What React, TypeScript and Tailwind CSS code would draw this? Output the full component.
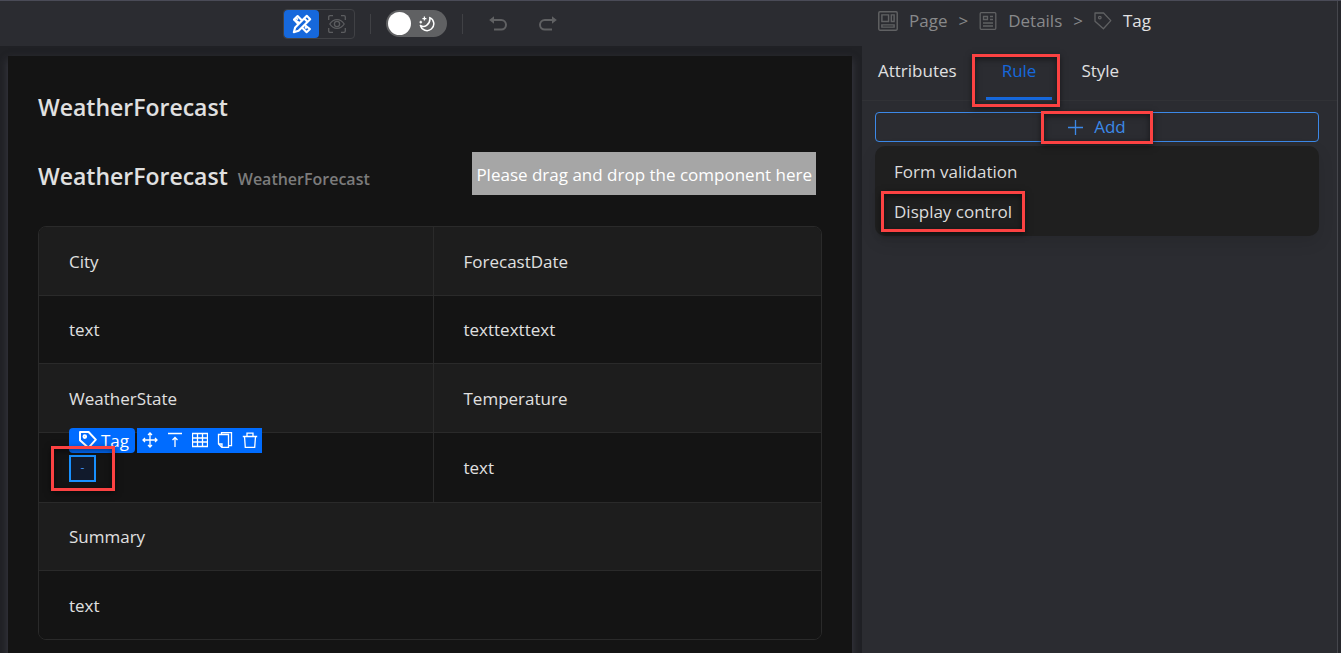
import { useState } from 'react';
import type { ReactNode } from 'react';
import clsx from 'clsx';

interface IconProps {
  className?: string;
}

function DesignIcon({ className }: IconProps) {
  return (
    <svg viewBox="0 0 20 20" fill="none" stroke="currentColor" strokeWidth="2.1" strokeLinejoin="round" className={className}>
      <path d="M7.2 8.8 2 5.6 5.6 2 8.8 5.2 9.9 6.3M12.8 11.2 18 15l-3.4 3.2-4.4-4.4" />
      <path d="M2 5.4 6.2 10M4.4 5.6l1.4-1.4M13.2 14.4l1.4-1.4" />
      <path d="M14.8 1.8 18.2 5.2 6.6 16.8 1.8 18.2 3.2 13.4Z" />
      <path d="m12.2 4.6 3.2 3.2" />
    </svg>
  );
}

function PreviewIcon({ className }: IconProps) {
  return (
    <svg viewBox="0 0 18 18" fill="none" stroke="currentColor" strokeWidth="1.3" className={className}>
      <path d="M.7 5V2Q.7.7 2 .7H5M13 .7h3Q17.3.7 17.3 2v3M17.3 13v3q0 1.3-1.3 1.3h-3M5 17.3H2Q.7 17.3.7 16v-3" />
      <path d="M1.8 9Q4.6 4.6 9 4.6T16.2 9Q13.4 13.4 9 13.4T1.8 9Z" />
      <circle cx="9" cy="9" r="2.6" />
    </svg>
  );
}

function MoonIcon({ className }: IconProps) {
  return (
    <svg viewBox="0 0 16 16" fill="none" stroke="currentColor" strokeWidth="1.5" className={className}>
      <path d="M10.8 1.6A6.8 6.8 0 1 1 1.4 9.4Q4.5 11.6 7.6 9.3 11.6 6.4 10.8 1.6Z" strokeLinejoin="round" />
      <path d="M5.4.6v4M3.4 2.6h4" strokeWidth="1.3" />
      <path d="M1.8 4.8v2.6M.5 6.1h2.6" strokeWidth="1.2" />
    </svg>
  );
}

function UndoIcon({ className }: IconProps) {
  return (
    <svg viewBox="0 0 18 16" fill="none" stroke="currentColor" strokeWidth="2" className={className}>
      <path d="M4 4h8.2a4.8 4.8 0 0 1 0 9.6H5" />
      <path d="M5 .2v7.6L.2 4Z" fill="currentColor" stroke="none" />
    </svg>
  );
}

function PageIcon({ className }: IconProps) {
  return (
    <svg viewBox="0 0 18 18" fill="none" stroke="currentColor" strokeWidth="1.3" className={className}>
      <rect x=".7" y=".7" width="16.6" height="16.6" rx="1" />
      <path d="M3.5 3.5h6v6h-6ZM12 3.5h2.5v6H12ZM3.5 12.5h11v2h-11Z" />
    </svg>
  );
}

function DetailsIcon({ className }: IconProps) {
  return (
    <svg viewBox="0 0 18 18" fill="none" stroke="currentColor" strokeWidth="1.3" className={className}>
      <rect x="1.2" y=".7" width="15.6" height="16.6" rx="1" />
      <path d="M4.5 4.5h4v3h-4ZM11 4.5h3M11 7.5h3M4 11h10M4 14h10" />
    </svg>
  );
}

function TagIcon({ className, strokeWidth = 1.3 }: IconProps & { strokeWidth?: number }) {
  return (
    <svg viewBox="0 0 18 18" fill="none" stroke="currentColor" strokeWidth={strokeWidth} className={className}>
      <path d="M1 1h8.6l7.2 7.6-7.4 8.2L1 9.2Z" strokeLinejoin="round" />
      <circle cx="5.8" cy="5.6" r="1.3" />
    </svg>
  );
}

// Red frame around a highlighted element
function Callout({ className }: IconProps) {
  return (
    <span
      className={clsx(
        'pointer-events-none absolute z-20 border-3 border-[#fc4242] shadow-[0_2px_6px_rgba(0,0,0,0.5),inset_0_2px_6px_rgba(0,0,0,0.5)]',
        className,
      )}
    />
  );
}

const TAG_ACTIONS = [
  { label: 'Move', path: 'M8 1v14M1 8h14M6 3l2-2 2 2M6 13l2 2 2-2M3 6 1 8l2 2M13 6l2 2-2 2' },
  { label: 'Select parent', path: 'M1 1.5h14M8 15V5.5M5.5 8 8 5.5 10.5 8' },
  { label: 'Grid', path: 'M.5 1.5h15v13H.5ZM.5 6h15M.5 10h15M5.5 1.5v13M10.5 1.5v13' },
  { label: 'Copy', path: 'M4.5 2.5V.6h10v13H12M1.5 2.5H11.5v13H5l-3.5-3.5ZM1.5 12H5v3.5' },
  { label: 'Delete', path: 'M.8 4.5h14.4M5 4.5V1.2h6v3.3M2.5 4.5l.8 10.9h9.4l.8-10.9' },
];

function TagSelection() {
  return (
    <div className="relative flex size-[27px] items-center justify-center border-2 border-[#1890ff] bg-[#111a2c] text-xs text-[#3c89e8]">
      -
      <div className="absolute -top-[29px] -left-0.5 z-10 flex h-[25px] gap-0.5 text-white">
        <div className="flex items-center gap-1 rounded-sm bg-[#006cff] pr-1.5 pl-2.5 text-[17px]">
          <TagIcon className="size-[18px]" strokeWidth={2} />
          <span className="pt-0.5">Tag</span>
        </div>
        <div className="flex bg-[#006cff]">
          {TAG_ACTIONS.map((action) => (
            <button key={action.label} aria-label={action.label} className="flex w-[25px] items-center justify-center">
              <svg viewBox="0 0 16 16" fill="none" stroke="currentColor" strokeWidth="1.3" className="size-4">
                <path d={action.path} />
              </svg>
            </button>
          ))}
        </div>
      </div>
      <Callout className="-top-[11px] -left-5 h-[45px] w-16" />
    </div>
  );
}

function Toolbar() {
  const [dark, setDark] = useState(true);

  return (
    <header className="flex h-[45px] items-center justify-center bg-[#2b2c31]">
      <div className="flex h-[30px] rounded border border-[#404145]">
        <button aria-label="Design" className="flex w-[35px] items-center justify-center rounded bg-[#1668dc] text-white">
          <DesignIcon className="size-5" />
        </button>
        <button aria-label="Preview" className="flex w-[35px] items-center justify-center text-[#5c5d60]">
          <PreviewIcon className="size-[18px]" />
        </button>
      </div>
      <div className="mx-[15px] h-5 w-px bg-[#404145]" />
      <button
        role="switch"
        aria-checked={dark}
        aria-label="Dark mode"
        onClick={() => setDark(!dark)}
        className="flex h-[27px] w-[61px] items-center justify-between rounded-full bg-[#606163] pr-3 pl-0.5"
      >
        <span className="size-[23px] rounded-full bg-white" />
        <MoonIcon className="size-4 text-white" />
      </button>
      <div className="ml-[15px] h-5 w-px bg-[#404145]" />
      <div className="flex pr-1.5 pl-2.5 text-[#606163]">
        <button aria-label="Undo" className="flex w-[50px] justify-center">
          <UndoIcon className="h-4 w-[18px]" />
        </button>
        <button aria-label="Redo" className="flex w-[50px] justify-center">
          <UndoIcon className="h-4 w-[18px] -scale-x-100" />
        </button>
      </div>
    </header>
  );
}

function Cell({ children, header, last, span }: { children: ReactNode; header?: boolean; last?: boolean; span?: number }) {
  const Tag = header ? 'th' : 'td';
  return (
    <Tag
      colSpan={span}
      className={clsx(
        'px-[30px] pt-0.5 text-left font-normal',
        header ? 'bg-[#1d1d1d]' : 'bg-[#141414]',
        last && 'border-l border-[#2a2a2a]',
      )}
    >
      {children}
    </Tag>
  );
}

function Canvas() {
  return (
    <main className="flex flex-1 bg-[#202125] px-2 pt-2.5 pr-2.5">
      <div className="flex-1 bg-[#141414] px-[30px] pt-[35px] pb-3 text-[#e0e0e0] shadow-[0_4px_8px_rgba(80,80,92,0.6)]">
        <h1 className="text-[23px] leading-8 font-semibold">WeatherForecast</h1>
        <div className="mt-[29px] mr-1.5 flex h-[43px] items-center justify-between">
          <div className="flex items-baseline gap-2.5 pt-1">
            <h2 className="text-[23px] leading-8 font-semibold">WeatherForecast</h2>
            <span className="text-base font-semibold text-[#7c7c7c]">WeatherForecast</span>
          </div>
          <div className="flex h-[43px] items-center bg-[#a6a6a6] px-1 pt-0.5 text-white">
            Please drag and drop the component here
          </div>
        </div>
        <div className="mt-[31px] overflow-hidden rounded-lg border border-[#2a2a2a]">
          <table className="w-full table-fixed border-collapse">
            <colgroup>
              <col className="w-[394px]" />
              <col />
            </colgroup>
            <tbody className="divide-y divide-[#2a2a2a]">
              <tr className="h-[68px]">
                <Cell header>City</Cell>
                <Cell header last>ForecastDate</Cell>
              </tr>
              <tr className="h-[68px]">
                <Cell>text</Cell>
                <Cell last>texttexttext</Cell>
              </tr>
              <tr className="h-[69px]">
                <Cell header>WeatherState</Cell>
                <Cell header last>Temperature</Cell>
              </tr>
              <tr className="h-[70px]">
                <Cell><TagSelection /></Cell>
                <Cell last>text</Cell>
              </tr>
              <tr className="h-[68px]">
                <Cell header span={2}>Summary</Cell>
              </tr>
              <tr className="h-[69px]">
                <Cell span={2}>text</Cell>
              </tr>
            </tbody>
          </table>
        </div>
      </div>
    </main>
  );
}

const TABS = ['Attributes', 'Rule', 'Style'];

function SidePanel() {
  const [tab, setTab] = useState('Rule');

  return (
    <aside className="mr-[3px] w-[476px] shrink-0 border-r border-[#45464c] bg-[#2b2c31]">
      <nav aria-label="Breadcrumb" className="flex h-[39px] items-center gap-[11px] pl-4 text-[#88898b]">
        <a href="#page" className="flex items-center gap-[11px]">
          <PageIcon className="size-5 text-[#606163]" />
          Page
        </a>
        <span>&gt;</span>
        <a href="#details" className="flex items-center gap-[11px]">
          <DetailsIcon className="size-[18px] text-[#606163]" />
          Details
        </a>
        <span>&gt;</span>
        <a href="#tag" className="flex items-center gap-[11px] text-[#e2e2e3]">
          <TagIcon className="size-[18px] text-[#606163]" />
          Tag
        </a>
      </nav>
      <div role="tablist" className="flex h-[61px] gap-[13px] border-b border-[#313236]">
        {TABS.map((name) => (
          <button
            key={name}
            role="tab"
            aria-selected={tab === name}
            onClick={() => setTab(name)}
            className={clsx(
              'relative border-b-3 px-4 pt-1',
              tab === name ? 'border-[#1668dc] text-[#1668dc]' : 'border-transparent text-[#e0e0e1]',
            )}
          >
            {name}
            {name === 'Rule' && <Callout className="-right-2 -left-3.5 top-3.5 h-[53px]" />}
          </button>
        ))}
      </div>
      <div className="pt-[11px] pr-[18px] pl-[13px]">
        <button className="flex h-[30px] w-full items-center justify-center rounded border border-[#3c89e8] text-[#3c89e8]">
          <span className="relative flex items-center gap-[11px]">
            <svg viewBox="0 0 15 15" stroke="currentColor" strokeWidth="1.3" className="size-[15px]">
              <path d="M7.5 0v15M0 7.5h15" />
            </svg>
            Add
            <Callout className="-inset-x-[27px] -top-1 -bottom-[5px]" />
          </span>
        </button>
        <ul className="mt-1 rounded-[10px] bg-[#1f1f1f] px-1 py-[5px] text-[#dcdcdc] shadow-[0_6px_16px_rgba(0,0,0,0.1)]">
          <li>
            <button className="h-10 px-[15px] pt-0.5">Form validation</button>
          </li>
          <li>
            <button className="relative h-10 px-[15px] pt-0.5">
              Display control
              <Callout className="inset-x-0.5 -bottom-px top-0" />
            </button>
          </li>
        </ul>
      </div>
    </aside>
  );
}

export default function App() {
  return (
    <div className="flex min-h-screen border-t border-[#4a4b57] bg-[#26272c] font-['Open_Sans','Noto_Sans',sans-serif] text-[17px] leading-6">
      <div className="flex min-w-0 flex-1 flex-col">
        <Toolbar />
        <Canvas />
      </div>
      <SidePanel />
    </div>
  );
}
